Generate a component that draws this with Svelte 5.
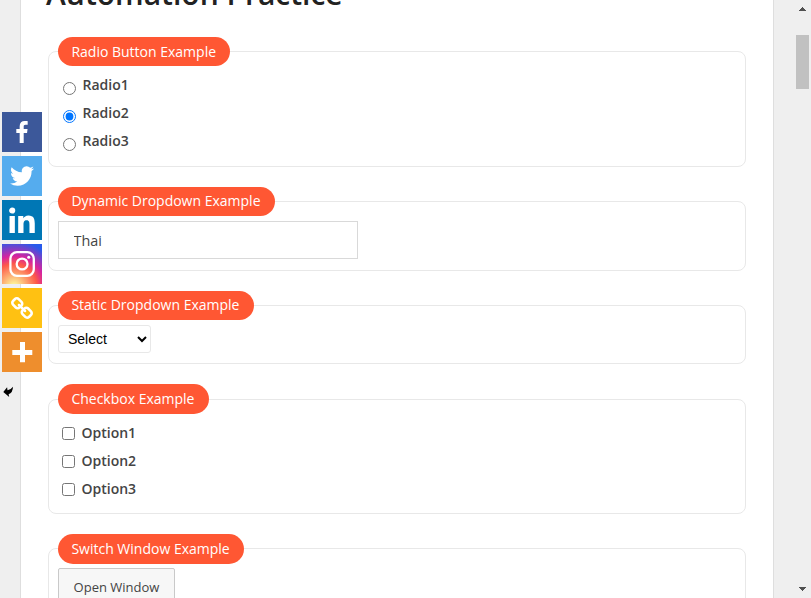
<script>
  const radios = ['Radio1', 'Radio2', 'Radio3'];
  const options = ['Option1', 'Option2', 'Option3'];
  let picked = $state('Radio2');
  let cuisine = $state('Thai');

  const shares = [
    { name: 'Facebook', bg: '#3c589a', box: '-5 -5 42 42', d: 'M17.78 27.5V17.008h3.522l.527-4.09h-4.05v-2.61c0-1.182.33-1.99 2.023-1.99h2.166V4.66c-.375-.05-1.66-.16-3.155-.16-3.123 0-5.26 1.905-5.26 5.405v3.016h-3.53v4.09h3.53V27.5h4.223z' },
    { name: 'Twitter', bg: '#55acee', box: '-4 -4 40 40', d: 'M28 8.557a9.913 9.913 0 0 1-2.828.775 4.93 4.93 0 0 0 2.166-2.725 9.738 9.738 0 0 1-3.13 1.194 4.92 4.92 0 0 0-3.593-1.55 4.924 4.924 0 0 0-4.794 6.049c-4.09-.21-7.72-2.17-10.15-5.15a4.942 4.942 0 0 0-.665 2.477c0 1.71.87 3.214 2.19 4.1a4.968 4.968 0 0 1-2.23-.616v.06c0 2.39 1.7 4.38 3.952 4.83-.414.115-.85.174-1.297.174-.318 0-.626-.03-.928-.086a4.935 4.935 0 0 0 4.6 3.42 9.893 9.893 0 0 1-6.114 2.107c-.398 0-.79-.023-1.175-.068a13.953 13.953 0 0 0 7.55 2.213c9.056 0 14.01-7.507 14.01-14.013 0-.213-.005-.426-.015-.637.96-.695 1.795-1.56 2.455-2.55z' },
    { name: 'LinkedIn', bg: '#0077b5', box: '0.3 0.1 31.5 31.5', d: 'M6.227 12.61h4.19v13.48h-4.19V12.61zm2.095-6.7a2.43 2.43 0 0 1 0 4.86c-1.344 0-2.428-1.09-2.428-2.43s1.084-2.43 2.428-2.43m4.72 6.7h4.02v1.84h.058c.56-1.058 1.927-2.176 3.965-2.176 4.238 0 5.02 2.792 5.02 6.42v7.395h-4.183v-6.56c0-1.564-.03-3.574-2.178-3.574-2.18 0-2.514 1.7-2.514 3.46v6.668h-4.187V12.61z' },
    { name: 'Instagram', bg: 'radial-gradient(circle at 30% 107%, #fdf497 0, #fdf497 5%, #fd5949 45%, #d6249f 60%, #285aeb 90%)', box: '0 0 40 40' },
    { name: 'Copy link', bg: '#ffc112', box: '-4 -4 40 40', d: 'M24.412 21.177c0-.36-.126-.665-.377-.917l-2.804-2.804a1.235 1.235 0 0 0-.913-.378c-.377 0-.7.144-.97.43.026.028.11.11.255.25.144.14.24.236.29.29s.117.14.2.256c.087.117.146.232.177.344.03.112.046.236.046.37 0 .36-.126.666-.377.918a1.25 1.25 0 0 1-.918.377 1.4 1.4 0 0 1-.373-.047 1.062 1.062 0 0 1-.345-.175 2.268 2.268 0 0 1-.256-.2 6.815 6.815 0 0 1-.29-.29c-.14-.142-.223-.23-.25-.254-.297.28-.445.607-.445.984 0 .36.126.664.377.916l2.778 2.79c.243.243.548.364.917.364.36 0 .665-.118.917-.35l1.982-1.97c.252-.25.378-.55.378-.9zm-9.477-9.504c0-.36-.126-.665-.377-.917l-2.777-2.79a1.235 1.235 0 0 0-.913-.378c-.35 0-.656.12-.917.364L7.967 9.92c-.254.252-.38.553-.38.903 0 .36.126.665.38.917l2.802 2.804c.242.243.547.364.916.364.377 0 .7-.14.97-.418-.026-.027-.11-.11-.255-.25s-.24-.235-.29-.29a2.675 2.675 0 0 1-.2-.255 1.052 1.052 0 0 1-.176-.344 1.396 1.396 0 0 1-.047-.37c0-.36.126-.662.377-.914.252-.252.557-.377.917-.377.136 0 .26.015.37.046.114.03.23.09.346.175.117.085.202.153.256.2.054.05.15.148.29.29.14.146.222.23.25.258.294-.278.442-.606.442-.983zM27 21.177c0 1.078-.382 1.99-1.146 2.736l-1.982 1.968c-.745.75-1.658 1.12-2.736 1.12-1.087 0-2.004-.38-2.75-1.143l-2.777-2.79c-.75-.747-1.12-1.66-1.12-2.737 0-1.106.392-2.046 1.183-2.818l-1.186-1.185c-.774.79-1.708 1.186-2.805 1.186-1.078 0-1.995-.376-2.75-1.13l-2.803-2.81C5.377 12.82 5 11.903 5 10.826c0-1.08.382-1.993 1.146-2.738L8.128 6.12C8.873 5.372 9.785 5 10.864 5c1.087 0 2.004.382 2.75 1.146l2.777 2.79c.75.747 1.12 1.66 1.12 2.737 0 1.105-.392 2.045-1.183 2.817l1.186 1.186c.774-.79 1.708-1.186 2.805-1.186 1.078 0 1.995.377 2.75 1.132l2.804 2.804c.754.755 1.13 1.672 1.13 2.75z' },
    { name: 'More', bg: '#ee8e2d', box: '0 0 40 40', d: 'M18 10h5v8h7.3v5H23v7.3h-5V23h-7.7v-5H18z' }
  ];
</script>

<div class="viewport">
  <main>
    <h1>Automation Practice</h1>

    <section class="radios">
      <h2>Radio Button Example</h2>
      {#each radios as r}
        <label><input type="radio" name="radio" value={r} bind:group={picked} /><span>{r}</span></label>
      {/each}
    </section>

    <section class="dynamic">
      <h2>Dynamic Dropdown Example</h2>
      <input class="text" type="text" bind:value={cuisine} />
    </section>

    <section class="static">
      <h2>Static Dropdown Example</h2>
      <select><option>Select</option></select>
    </section>

    <section class="checks">
      <h2>Checkbox Example</h2>
      {#each options as o}
        <label><input type="checkbox" /><span>{o}</span></label>
      {/each}
    </section>

    <section class="switch">
      <h2>Switch Window Example</h2>
      <button>Open Window</button>
    </section>
  </main>

  <div class="scrollbar">
    <svg width="7" height="4" viewBox="0 0 7 4" shape-rendering="crispEdges"><path d="M3 0h1v1h1v1h1v1h1v1H0V3h1V2h1V1h1z" /></svg>
    <div class="thumb"></div>
    <svg width="7" height="4" viewBox="0 0 7 4" shape-rendering="crispEdges"><path d="M0 0h7v1H6v1H5v1H4v1H3V3H2V2H1V1H0z" /></svg>
  </div>

  <nav>
    {#each shares as s}
      <a href="#share" aria-label={s.name} style="background: {s.bg}">
        <svg width="40" height="40" viewBox={s.box}>
          {#if s.d}
            <path d={s.d} fill="#fff" />
          {:else}
            <g fill="none" stroke="#fff" stroke-width="2.3">
              <rect x="8.4" y="8.2" width="23.4" height="23.6" rx="6.5" />
              <circle cx="20.1" cy="20" r="5.4" />
            </g>
            <circle cx="26.7" cy="13.2" r="1.5" fill="#fff" />
          {/if}
        </svg>
      </a>
    {/each}
    <svg class="hide" width="12" height="14" viewBox="0 0 12 14"><path d="M1.300 6.900 5.100 2.300 5.500 5.300Q8.300 5.200 11 1.700 10.800 7.700 6.600 9.200L7.200 12Z" /></svg>
  </nav>
</div>

<style>
  :global(body) { overflow: hidden; }
  .viewport {
    position: relative;
    display: flex;
    justify-content: space-between;
    box-sizing: border-box;
    width: 811px;
    height: 598px;
    padding-left: 20px;
    overflow: hidden;
    background: #efefef;
    font-family: "Open Sans", sans-serif;
    color: #444;
  }
  main {
    box-sizing: border-box;
    width: 754px;
    height: 598px;
    padding: 0 27px;
    overflow: hidden;
    background: #fff;
    border: solid #dedede;
    border-width: 0 1px;
  }
  h1 {
    margin: -26px 0 37px -2px;
    font-size: 30px;
    line-height: 40px;
    font-weight: 600;
    color: #222;
    white-space: nowrap;
  }
  section {
    display: flex;
    flex-direction: column;
    align-items: flex-start;
    box-sizing: border-box;
    width: 698px;
    padding: 0 9px;
    border: 1px solid #e8e8e8;
    border-radius: 8px;
    margin-bottom: 34px;
  }
  .radios { height: 116px; }
  .dynamic { height: 70px; }
  .static { height: 59px; margin-bottom: 35px; }
  .checks { height: 115px; }
  .switch { height: 110px; }
  h2 {
    flex: none;
    margin: -15px 0 5px;
    padding: 0 14px 0 13.4px;
    border-radius: 15px;
    background: #ff5733;
    color: #fff;
    font-size: 14px;
    line-height: 29px;
    font-weight: 500;
    white-space: nowrap;
  }
  .dynamic h2, .static h2 { padding-bottom: 2px; padding-right: 14.6px; line-height: 27px; }
  .checks h2, .switch h2 { margin-top: -16px; padding-right: 14.6px; line-height: 30px; }
  .switch h2 { margin-top: -15px; margin-bottom: 4px; }
  label {
    display: flex;
    height: 28px;
    font-size: 14px;
    line-height: 28px;
    font-weight: 600;
  }
  .radios label input { margin: 11px 6.500px 0 5px; }
  .checks label input { margin: 8px 6.500px 0 4px; }
  input[type="radio"], input[type="checkbox"] { width: 13px; height: 13px; }
  .text {
    box-sizing: border-box;
    width: 300px;
    height: 38px;
    padding: 0 14.5px;
    border: 1px solid #d9d9d9;
    font: 400 14.4px "Open Sans", sans-serif;
    color: #444;
  }
  select {
    width: 93px;
    height: 28px;
    padding: 0 4px 0 5px;
    border: 1px solid #e8e8e8;
    border-radius: 3px;
    background: #fff;
    color: #000;
    font: 14px "Liberation Sans", sans-serif;
  }
  button {
    box-sizing: border-box;
    width: 117px;
    height: 38px;
    padding: 0;
    border: 1px solid #c9c9c9;
    border-radius: 2px;
    background: #f7f7f7;
    color: #444;
    font: 400 13px "Open Sans", sans-serif;
  }
  .scrollbar {
    display: flex;
    flex-direction: column;
    align-items: center;
    box-sizing: border-box;
    width: 15px;
    padding: 7px 2px 7px 0;
    fill: #505050;
  }
  .thumb { width: 13px; height: 54px; margin: 24px 0 auto; background: #c1c1c1; }
  nav {
    position: absolute;
    left: 2px;
    top: 112px;
    display: flex;
    flex-direction: column;
    gap: 4px;
  }
  nav a { display: block; width: 40px; height: 40px; }
  nav svg { display: block; }
  .hide { margin-top: 9px; }
</style>
